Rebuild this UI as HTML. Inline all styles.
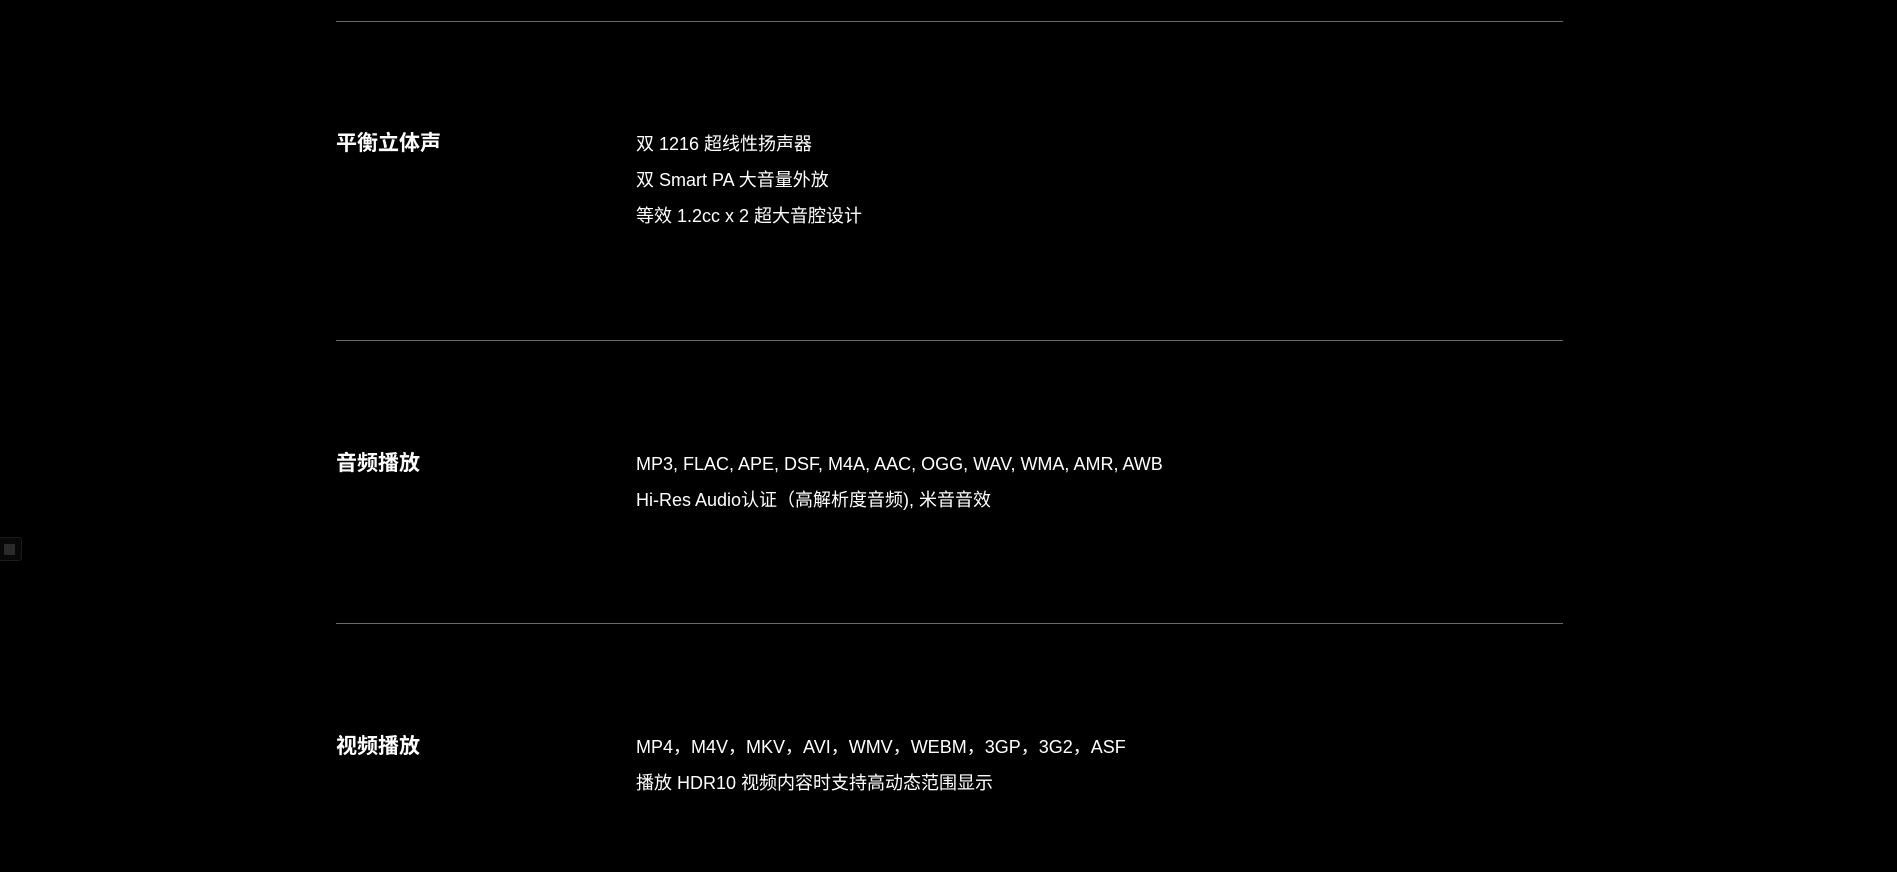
<!DOCTYPE html>
<html><head><meta charset="utf-8"><style>
html,body{margin:0;padding:0;background:#000;width:1897px;height:872px;overflow:hidden;position:relative;font-family:"Liberation Sans","Noto Sans CJK SC",sans-serif;color:#fff}
.line{position:absolute;left:336px;width:1227px;height:1px;background:#6a6a6a}
.h{position:absolute;left:336px;font-size:21px;font-weight:bold;line-height:24px}
.c{position:absolute;left:636px;font-size:18px;line-height:36px}
.sq{position:absolute;left:-2px;top:537px;width:22px;height:22px;border:1px solid #1c1c1c;border-radius:3px;background:#080808}
.sq:after{content:"";position:absolute;left:5px;top:6px;width:11px;height:11px;background:#2a2a2a}
</style></head><body>
<div class="line" style="top:21px"></div>
<div class="h" style="top:132px">平衡立体声</div>
<div class="c" style="top:126px">双 1216 超线性扬声器<br>双 Smart PA 大音量外放<br>等效 1.2cc x 2 超大音腔设计</div>
<div class="line" style="top:340px"></div>
<div class="h" style="top:452px">音频播放</div>
<div class="c" style="top:446px">MP3, FLAC, APE, DSF, M4A, AAC, OGG, WAV, WMA, AMR, AWB<br>Hi-Res Audio认证（高解析度音频), 米音音效</div>
<div class="line" style="top:623px"></div>
<div class="h" style="top:735px">视频播放</div>
<div class="c" style="top:729px">MP4，M4V，MKV，AVI，WMV，WEBM，3GP，3G2，ASF<br>播放 HDR10 视频内容时支持高动态范围显示</div>
<div class="sq"></div>
</body></html>
